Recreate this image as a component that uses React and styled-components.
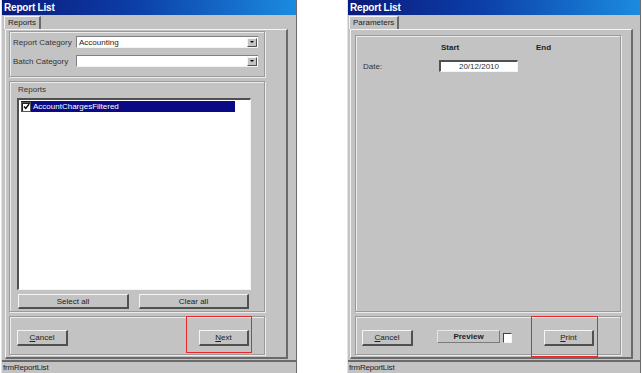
import React from "react"
import styled, { createGlobalStyle } from "styled-components"

const GlobalStyle = createGlobalStyle`
  body {
    margin: 0;
    background: #ffffff;
    font-family: "Liberation Sans", Arial, sans-serif;
  }
`

const Screen = styled.div`
  display: flex;
  gap: 50px;
  padding-left: 1px;
  height: 373px;
  overflow: hidden;
`

const Window = styled.div`
  width: ${p => p.$w}px;
  height: 373px;
  display: flex;
  flex-direction: column;
  background: #c3c3c3;
  border-left: 1px solid #e2e2e2;
  border-right: 1px solid #6a6a6a;
  box-sizing: border-box;
`

const TitleBar = styled.div`
  height: 15px;
  line-height: 15px;
  padding-left: 2px;
  background: linear-gradient(to right, #0a1a7a 0%, #0c3ea8 45%, #1b8be0 100%);
  color: #ffffff;
  font-size: 10px;
  font-weight: 700;
  letter-spacing: -0.2px;
`

const Body = styled.div`
  flex: 1;
  padding: 0 0 0 ${p => p.$pad}px;
  display: flex;
  flex-direction: column;
`

const TabStrip = styled.div`
  height: 14px;
  display: flex;
  align-items: flex-end;
`

const Tab = styled.div`
  height: 13px;
  line-height: 12px;
  padding: 0 3px;
  font-size: 8px;
  color: #222;
  border-top: 1px solid #f4f4f4;
  border-left: 1px solid #f4f4f4;
  border-right: 2px solid #6a6a6a;
  box-sizing: border-box;
`

const Panel = styled.div`
  width: ${p => p.$w}px;
  height: 330px;
  margin-left: 1px;
  box-sizing: border-box;
  border-top: 1px solid #f4f4f4;
  border-left: 1px solid #f4f4f4;
  border-right: 2px solid #6a6a6a;
  border-bottom: 2px solid #6a6a6a;
  padding: ${p => p.$top}px 0 0 ${p => p.$left}px;
  display: flex;
  flex-direction: column;
  gap: 4px;
`

const Group = styled.div`
  width: ${p => p.$w}px;
  height: ${p => p.$h}px;
  box-sizing: border-box;
  border: 1px solid #9a9a9a;
  box-shadow: 1px 1px 0 #ececec, inset 1px 1px 0 #ececec;
`

const FieldGroup = styled(Group)`
  padding: 4px 0 0 3px;
  display: grid;
  grid-template-columns: 63px 182px;
  row-gap: 7px;
  align-content: start;
  align-items: center;
`

const Label = styled.span`
  font-size: 8px;
  color: #333;
  white-space: nowrap;
`

const Combo = styled.div`
  height: 12px;
  box-sizing: border-box;
  background: #ffffff;
  border-top: 1px solid #808080;
  border-left: 1px solid #808080;
  border-bottom: 1px solid #f4f4f4;
  display: flex;
  align-items: center;
  justify-content: space-between;
  font-size: 8px;
  color: #222;
  padding-left: 2px;
`

const DropButton = styled.span`
  width: 10px;
  height: 9px;
  margin-right: 1px;
  box-sizing: border-box;
  background: #c3c3c3;
  border-top: 1px solid #f4f4f4;
  border-left: 1px solid #f4f4f4;
  border-right: 1px solid #505050;
  border-bottom: 1px solid #505050;
  display: flex;
  align-items: center;
  justify-content: center;

  &::after {
    content: "";
    border-left: 2px solid transparent;
    border-right: 2px solid transparent;
    border-top: 2px solid #000;
  }
`

const ListGroup = styled(Group)`
  padding: 2px 0 0 7px;
  display: flex;
  flex-direction: column;
`

const GroupCaption = styled.div`
  height: 12px;
  line-height: 12px;
  margin: 0 0 2px 1px;
  font-size: 8px;
  color: #333;
`

const ListBox = styled.div`
  width: 234px;
  height: 192px;
  box-sizing: border-box;
  background: #ffffff;
  border-top: 2px solid #505050;
  border-left: 2px solid #505050;
  border-bottom: 1px solid #f4f4f4;
  border-right: 1px solid #f4f4f4;
  padding: 1px 0 0 2px;
`

const ListItem = styled.div`
  width: 214px;
  height: 11px;
  display: flex;
  align-items: center;
  gap: 2px;
  background: ${p => (p.$selected ? "#0a0a84" : "transparent")};
  color: ${p => (p.$selected ? "#ffffff" : "#222")};
  font-size: 8px;
`

const Check = styled.span`
  width: 10px;
  height: 10px;
  box-sizing: border-box;
  background: #ffffff;
  border: 1px solid #555;
  box-shadow: inset 1px 1px 0 #222;
  display: flex;
  align-items: center;
  justify-content: center;
  flex: none;
`

const ButtonRow = styled.div`
  display: flex;
  gap: 10px;
  margin: 4px 0 0 1px;
`

const Button = styled.div`
  width: ${p => p.$w}px;
  height: ${p => p.$h || 15}px;
  box-sizing: border-box;
  background: #c3c3c3;
  border-top: 1px solid #f4f4f4;
  border-left: 1px solid #f4f4f4;
  border-right: 2px solid #505050;
  border-bottom: 2px solid #505050;
  display: flex;
  align-items: center;
  justify-content: center;
  font-size: 8px;
  color: #222;
  flex: none;
`

const ActionGroup = styled(Group)`
  display: flex;
  align-items: flex-start;
  padding-left: ${p => p.$left}px;
`

const Spaced = styled.div`
  margin-top: ${p => p.$top}px;
  margin-left: ${p => p.$left || 0}px;
  flex: none;
`

const Highlight = styled.div`
  margin-left: auto;
  margin-right: ${p => p.$right}px;
  margin-top: -1px;
  width: ${p => p.$w}px;
  height: ${p => p.$h}px;
  box-sizing: border-box;
  border: 1.5px solid #e8272a;
  padding: 13px 0 0 12px;
  flex: none;
`

const ParamGroup = styled(Group)`
  padding: 7px 0 0 7px;
  display: grid;
  grid-template-columns: 60px 79px 79px;
  column-gap: 16px;
  row-gap: 7px;
  align-content: start;
  align-items: center;
`

const ColHead = styled.span`
  font-size: 8px;
  font-weight: 700;
  color: #222;
  padding-left: ${p => p.$pad}px;
  height: 10px;
  line-height: 10px;
`

const DateBox = styled.div`
  height: 12px;
  box-sizing: border-box;
  background: #ffffff;
  border-top: 2px solid #505050;
  border-left: 2px solid #505050;
  border-bottom: 1px solid #f4f4f4;
  border-right: 1px solid #f4f4f4;
  font-size: 8px;
  color: #333;
  text-align: center;
  line-height: 9px;
`

const FlatBox = styled.div`
  width: 63px;
  height: 13px;
  box-sizing: border-box;
  border-top: 1px solid #e6e6e6;
  border-left: 1px solid #e6e6e6;
  border-right: 1px solid #7a7a7a;
  border-bottom: 1px solid #7a7a7a;
  font-size: 8px;
  font-weight: 700;
  color: #222;
  text-align: center;
  line-height: 11px;
`

const SmallCheck = styled.div`
  width: 9px;
  height: 10px;
  box-sizing: border-box;
  background: #ffffff;
  border-top: 1px solid #404040;
  border-left: 1px solid #404040;
  border-bottom: 1px solid #f4f4f4;
  border-right: 1px solid #f4f4f4;
`

const StatusBar = styled.div`
  height: 13px;
  border-top: 2px solid #6a6a6a;
  box-sizing: border-box;
  padding-left: 1px;
  font-size: 8px;
  line-height: 11px;
  color: #222;
  letter-spacing: -0.2px;
`

const CheckMark = () => (
  <svg width="7" height="7" viewBox="0 0 7 7">
    <path d="M1 3.5 L2.8 5.5 L6 1.2" fill="none" stroke="#000" strokeWidth="1.4" />
  </svg>
)

const ReportsWindow = () => (
  <Window $w={296}>
    <TitleBar>Report List</TitleBar>
    <Body $pad={2}>
      <TabStrip>
        <Tab>Reports</Tab>
      </TabStrip>
      <Panel $w={283} $top={1} $left={3}>
        <FieldGroup $w={256} $h={46}>
          <Label>Report Category</Label>
          <Combo>
            Accounting
            <DropButton />
          </Combo>
          <Label>Batch Category</Label>
          <Combo>
            <span />
            <DropButton />
          </Combo>
        </FieldGroup>
        <ListGroup $w={256} $h={231}>
          <GroupCaption>Reports</GroupCaption>
          <ListBox>
            <ListItem $selected>
              <Check>
                <CheckMark />
              </Check>
              AccountChargesFiltered
            </ListItem>
          </ListBox>
          <ButtonRow>
            <Button $w={111}>Select all</Button>
            <Button $w={110}>Clear all</Button>
          </ButtonRow>
        </ListGroup>
        <ActionGroup $w={256} $h={39} $left={7}>
          <Spaced $top={13}>
            <Button $w={51} $h={16}>
              <span><u>C</u>ancel</span>
            </Button>
          </Spaced>
          <Highlight $w={66} $h={37} $right={12}>
            <Button $w={50} $h={16}>
              <span><u>N</u>ext</span>
            </Button>
          </Highlight>
        </ActionGroup>
      </Panel>
    </Body>
    <StatusBar>frmReportList</StatusBar>
  </Window>
)

const ParametersWindow = () => (
  <Window $w={294}>
    <TitleBar>Report List</TitleBar>
    <Body $pad={1}>
      <TabStrip>
        <Tab>Parameters</Tab>
      </TabStrip>
      <Panel $w={283} $top={5} $left={4}>
        <ParamGroup $w={266} $h={277}>
          <span />
          <ColHead $pad={2}>Start</ColHead>
          <ColHead $pad={2}>End</ColHead>
          <Label>Date:</Label>
          <DateBox>20/12/2010</DateBox>
          <span />
        </ParamGroup>
        <ActionGroup $w={266} $h={39} $left={6}>
          <Spaced $top={13}>
            <Button $w={51} $h={16}>
              <span><u>C</u>ancel</span>
            </Button>
          </Spaced>
          <Spaced $top={13} $left={24}>
            <FlatBox>Preview</FlatBox>
          </Spaced>
          <Spaced $top={16} $left={3}>
            <SmallCheck />
          </Spaced>
          <Highlight $w={67} $h={41} $right={22}>
            <Button $w={50} $h={16}>
              <span><u>P</u>rint</span>
            </Button>
          </Highlight>
        </ActionGroup>
      </Panel>
    </Body>
    <StatusBar>frmReportList</StatusBar>
  </Window>
)

const App = () => (
  <>
    <GlobalStyle />
    <Screen>
      <ReportsWindow />
      <ParametersWindow />
    </Screen>
  </>
)

export default App
